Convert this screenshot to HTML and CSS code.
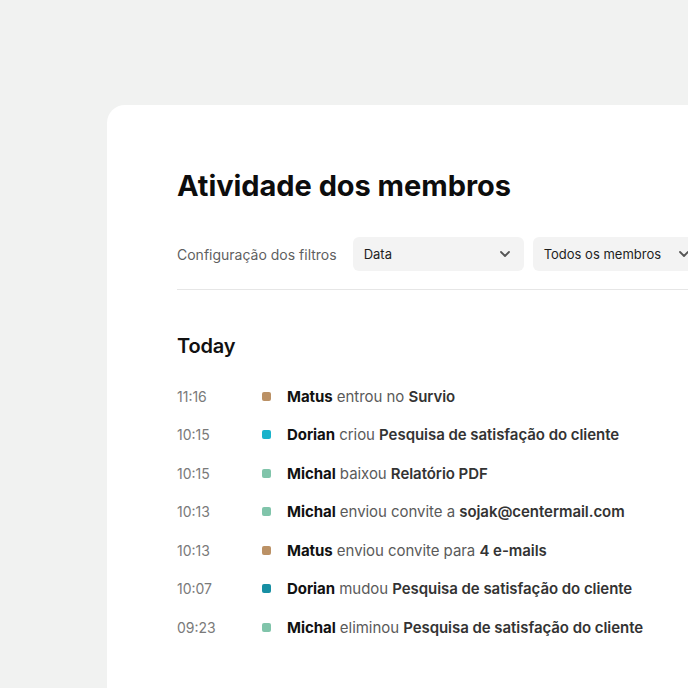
FILE: index.html
```html
<!DOCTYPE html>
<html lang="pt">
<head>
<meta charset="utf-8">
<title>Atividade dos membros</title>
<link rel="stylesheet" href="styles.css">
</head>
<body>
<div class="page">
  <main class="card">
    <h1 class="title">Atividade dos membros</h1>
    <div class="filters">
      <span class="filters-label">Configuração dos filtros</span>
      <div class="select select-date">
        <span>Data</span>
        <svg class="chev" width="12" height="8" viewBox="0 0 12 8"><path d="M2 2l4 4 4-4" fill="none" stroke="#555" stroke-width="1.8" stroke-linecap="round" stroke-linejoin="round"/></svg>
      </div>
      <div class="select select-members">
        <span>Todos os membros</span>
        <svg class="chev" width="12" height="8" viewBox="0 0 12 8"><path d="M2 2l4 4 4-4" fill="none" stroke="#555" stroke-width="1.8" stroke-linecap="round" stroke-linejoin="round"/></svg>
      </div>
    </div>
    <hr class="divider">
    <h2 class="day">Today</h2>
    <ul class="feed">
      <li class="row"><span class="time">11:16</span><span class="dot tan"></span><span class="text"><b>Matus</b> <span class="act">entrou no</span> <strong>Survio</strong></span></li>
      <li class="row"><span class="time">10:15</span><span class="dot cyan"></span><span class="text"><b>Dorian</b> <span class="act">criou</span> <strong>Pesquisa de satisfação do cliente</strong></span></li>
      <li class="row"><span class="time">10:15</span><span class="dot green"></span><span class="text"><b>Michal</b> <span class="act">baixou</span> <strong>Relatório PDF</strong></span></li>
      <li class="row"><span class="time">10:13</span><span class="dot green"></span><span class="text"><b>Michal</b> <span class="act">enviou convite a</span> <strong>sojak@centermail.com</strong></span></li>
      <li class="row"><span class="time">10:13</span><span class="dot tan"></span><span class="text"><b>Matus</b> <span class="act">enviou convite para</span> <strong>4 e-mails</strong></span></li>
      <li class="row"><span class="time">10:07</span><span class="dot teal"></span><span class="text"><b>Dorian</b> <span class="act">mudou</span> <strong>Pesquisa de satisfação do cliente</strong></span></li>
      <li class="row"><span class="time">09:23</span><span class="dot green"></span><span class="text"><b>Michal</b> <span class="act">eliminou</span> <strong>Pesquisa de satisfação do cliente</strong></span></li>
    </ul>
  </main>
</div>
</body>
</html>
```
FILE: styles.css
```css
html, body {
  margin: 0;
  padding: 0;
  background: #f1f2f1;
  font-family: Inter, "Noto Sans", sans-serif;
  overflow: hidden;
}
.page {
  width: 688px;
  height: 688px;
  overflow: hidden;
  padding: 105px 0 0 107px;
  box-sizing: border-box;
}
.card {
  background: #ffffff;
  border-radius: 18px;
  width: 700px;
  height: 700px;
  padding: 62px 0 0 70px;
  box-sizing: border-box;
}
.title {
  margin: 0;
  font-size: 29px;
  font-weight: 700;
  letter-spacing: -0.05px;
  color: #0d0d0d;
  line-height: 38px;
}
.filters {
  display: flex;
  align-items: center;
  margin-top: 32px;
}
.filters-label {
  font-size: 14px;
  color: #5f5f5f;
  margin-right: 16px;
}
.select {
  display: flex;
  align-items: center;
  justify-content: space-between;
  height: 34px;
  background: #f3f3f3;
  border-radius: 6px;
  padding: 0 13px 0 11px;
  box-sizing: border-box;
  font-size: 13px;
  color: #1e1e1e;
  flex-shrink: 0;
}
.select-date { width: 171px; margin-right: 9px; }
.select-members { width: 170px; }
.chev { display: block; }
.divider {
  border: 0;
  border-top: 1.5px solid #e6e6e6;
  margin: 18px 0 0 0;
}
.day {
  margin: 42px 0 0 0;
  font-size: 20px;
  font-weight: 600;
  color: #111;
  line-height: 28px;
  letter-spacing: -0.2px;
}
.feed {
  list-style: none;
  margin: 17px 0 0 0;
  padding: 0;
}
.row {
  display: flex;
  align-items: center;
  height: 38.5px;
  white-space: nowrap;
}
.time {
  width: 85px;
  font-size: 14px;
  color: #7a7a7a;
}
.dot {
  width: 9px;
  height: 9px;
  border-radius: 2px;
  margin-right: 16px;
  flex-shrink: 0;
}
.tan { background: #bb9165; }
.cyan { background: #1ab3cb; }
.green { background: #80c4aa; }
.teal { background: #178fa3; }
.text {
  font-size: 15px;
  color: #5a5a5a;
  letter-spacing: -0.05px;
}
.text b {
  font-weight: 700;
  color: #111;
}
.text strong {
  font-weight: 600;
  color: #333;
}
```
